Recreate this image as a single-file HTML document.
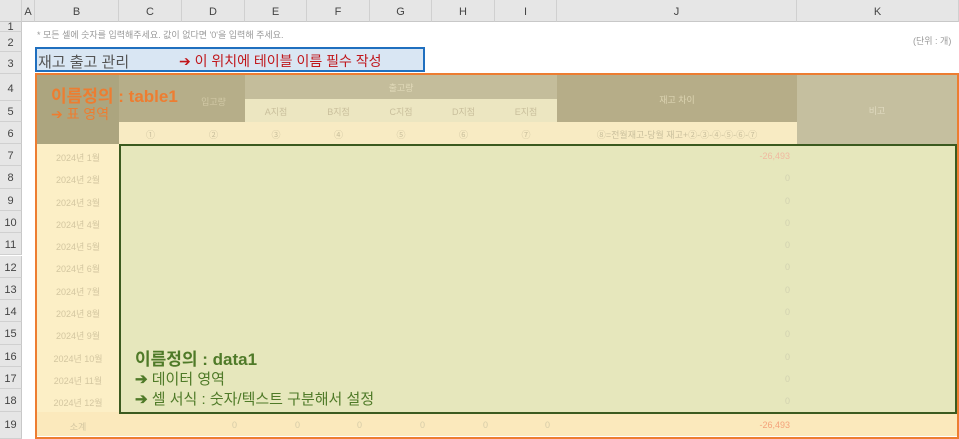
<!DOCTYPE html>
<html><head><meta charset="utf-8"><style>
*{margin:0;padding:0;box-sizing:border-box}
body{width:959px;height:439px;overflow:hidden;background:#fff;font-family:"Liberation Sans","Noto Sans CJK KR",sans-serif;position:relative}
.a{position:absolute}
.ch{position:absolute;top:0;height:22px;background:#e6e6e6;border-right:1px solid #d0d0d0;border-bottom:1px solid #c8c8c8;font-size:11px;color:#444;text-align:center;line-height:24px}
.rh{position:absolute;left:0;width:22px;background:#e6e6e6;border-bottom:1px solid #d0d0d0;border-right:1px solid #c8c8c8;font-size:11px;color:#444;text-align:center}
.t{position:absolute;font-size:9px;color:#c9bf9c;text-align:center}
.m{position:absolute;left:37px;width:82px;font-size:9px;color:#d3c6a0;text-align:center}
.z{position:absolute;font-size:9px;color:#d2d2b0;text-align:right}
</style></head><body>
<div class="ch" style="left:0;width:22px"></div>
<div class="ch" style="left:22px;width:13px">A</div>
<div class="ch" style="left:35px;width:84px">B</div>
<div class="ch" style="left:119px;width:63px">C</div>
<div class="ch" style="left:182px;width:63px">D</div>
<div class="ch" style="left:245px;width:62px">E</div>
<div class="ch" style="left:307px;width:63px">F</div>
<div class="ch" style="left:370px;width:62px">G</div>
<div class="ch" style="left:432px;width:63px">H</div>
<div class="ch" style="left:495px;width:62px">I</div>
<div class="ch" style="left:557px;width:240px">J</div>
<div class="ch" style="left:797px;width:162px">K</div>
<div class="rh" style="top:22px;height:10px;line-height:10px">1</div>
<div class="rh" style="top:32px;height:20px;line-height:22px">2</div>
<div class="rh" style="top:52px;height:22px;line-height:24px">3</div>
<div class="rh" style="top:74px;height:27px;line-height:30px">4</div>
<div class="rh" style="top:101px;height:21px;line-height:23px">5</div>
<div class="rh" style="top:122px;height:22px;line-height:24px">6</div>
<div class="rh" style="top:144px;height:22.3px;line-height:24px">7</div>
<div class="rh" style="top:166.3px;height:22.3px;line-height:24px">8</div>
<div class="rh" style="top:188.6px;height:22.3px;line-height:24px">9</div>
<div class="rh" style="top:210.9px;height:22.3px;line-height:24px">10</div>
<div class="rh" style="top:233.2px;height:22.3px;line-height:24px">11</div>
<div class="rh" style="top:255.5px;height:22.3px;line-height:24px">12</div>
<div class="rh" style="top:277.8px;height:22.3px;line-height:24px">13</div>
<div class="rh" style="top:300.1px;height:22.3px;line-height:24px">14</div>
<div class="rh" style="top:322.4px;height:22.3px;line-height:24px">15</div>
<div class="rh" style="top:344.7px;height:22.3px;line-height:24px">16</div>
<div class="rh" style="top:367px;height:22.3px;line-height:24px">17</div>
<div class="rh" style="top:389.3px;height:22.3px;line-height:24px">18</div>
<div class="rh" style="top:411.6px;height:27.4px;line-height:26px">19</div>

<div class="a" style="left:37px;top:28px;font-size:9px;color:#999">* 모든 셀에 숫자를 입력해주세요. 값이 없다면 '0'을 입력해 주세요.</div>
<div class="a" style="left:913px;top:34px;font-size:9px;color:#999">(단위 : 개)</div>

<div class="a" style="left:35px;top:47px;width:390px;height:25px;background:#d9e6f3;border:2px solid #1f6fbf"></div>
<div class="a" style="left:38px;top:51px;font-size:15px;color:#555">재고 출고 관리</div>
<div class="a" style="left:179px;top:51px;font-size:14px;color:#c0161b">➔ 이 위치에 테이블 이름 필수 작성</div>

<div class="a" style="left:37px;top:75px;width:82px;height:69px;background:#aca57f"></div>
<div class="a" style="left:119px;top:75px;width:126px;height:47px;background:#b6ae89"></div>
<div class="a" style="left:245px;top:75px;width:312px;height:24px;background:#c4bd9b"></div>
<div class="a" style="left:245px;top:99px;width:312px;height:23px;background:#ece6c1"></div>
<div class="a" style="left:557px;top:75px;width:240px;height:47px;background:#b6ad88"></div>
<div class="a" style="left:797px;top:75px;width:160px;height:69px;background:#c5bf9f"></div>
<div class="a" style="left:119px;top:122px;width:678px;height:22px;background:#f8ebc3"></div>
<div class="t" style="left:182px;top:95px;width:63px;color:#d0c8a5">입고량</div>
<div class="t" style="left:245px;top:81px;width:312px;color:#e0d9b8">출고량</div>
<div class="t" style="left:245px;top:105px;width:62px">A지점</div>
<div class="t" style="left:307px;top:105px;width:63px">B지점</div>
<div class="t" style="left:370px;top:105px;width:62px">C지점</div>
<div class="t" style="left:432px;top:105px;width:63px">D지점</div>
<div class="t" style="left:495px;top:105px;width:62px">E지점</div>
<div class="t" style="left:557px;top:93px;width:240px;color:#dcd4b2">재고 차이</div>
<div class="t" style="left:797px;top:104px;width:160px;color:#e0dac0">비고</div>
<div class="t" style="left:119px;top:128px;width:63px">①</div>
<div class="t" style="left:182px;top:128px;width:63px">②</div>
<div class="t" style="left:245px;top:128px;width:62px">③</div>
<div class="t" style="left:307px;top:128px;width:63px">④</div>
<div class="t" style="left:370px;top:128px;width:62px">⑤</div>
<div class="t" style="left:432px;top:128px;width:63px">⑥</div>
<div class="t" style="left:495px;top:128px;width:62px">⑦</div>
<div class="t" style="left:557px;top:128px;width:240px">⑧=전월재고-당월 재고+②-③-④-⑤-⑥-⑦</div>

<div class="a" style="left:37px;top:144px;width:82px;height:268px;background:#fcefc6"></div>
<div class="a" style="left:37px;top:412px;width:920px;height:24px;background:#fbe9bc"></div>
<div class="a" style="left:119px;top:144px;width:838px;height:270px;background:#e6e7bc;border:2px solid #3b5a1f"></div>

<div class="m" style="top:151px">2024년 1월</div>
<div class="m" style="top:173px">2024년 2월</div>
<div class="m" style="top:196px">2024년 3월</div>
<div class="m" style="top:218px">2024년 4월</div>
<div class="m" style="top:240px">2024년 5월</div>
<div class="m" style="top:262px">2024년 6월</div>
<div class="m" style="top:285px">2024년 7월</div>
<div class="m" style="top:307px">2024년 8월</div>
<div class="m" style="top:329px">2024년 9월</div>
<div class="m" style="top:352px">2024년 10월</div>
<div class="m" style="top:374px">2024년 11월</div>
<div class="m" style="top:396px">2024년 12월</div>
<div class="m" style="top:420px">소계</div>

<div class="z" style="right:169px;top:151px;color:#f0b9a0">-26,493</div>
<div class="z" style="right:169px;top:173px">0</div>
<div class="z" style="right:169px;top:196px">0</div>
<div class="z" style="right:169px;top:218px">0</div>
<div class="z" style="right:169px;top:240px">0</div>
<div class="z" style="right:169px;top:262px">0</div>
<div class="z" style="right:169px;top:285px">0</div>
<div class="z" style="right:169px;top:307px">0</div>
<div class="z" style="right:169px;top:329px">0</div>
<div class="z" style="right:169px;top:352px">0</div>
<div class="z" style="right:169px;top:374px">0</div>
<div class="z" style="right:169px;top:396px">0</div>
<div class="z" style="left:232px;top:420px;color:#d6cca8">0</div>
<div class="z" style="left:295px;top:420px;color:#d6cca8">0</div>
<div class="z" style="left:357px;top:420px;color:#d6cca8">0</div>
<div class="z" style="left:420px;top:420px;color:#d6cca8">0</div>
<div class="z" style="left:483px;top:420px;color:#d6cca8">0</div>
<div class="z" style="left:545px;top:420px;color:#d6cca8">0</div>
<div class="z" style="right:169px;top:420px;color:#f4a27a">-26,493</div>

<div class="a" style="left:35px;top:73px;width:924px;height:366px;border:2px solid #ed7d31"></div>
<div class="a" style="left:51px;top:82px;font-size:17px;font-weight:bold;color:#ed7d31">이름정의 : table1</div>
<div class="a" style="left:51px;top:104px;font-size:14px;color:#ed7d31">➔ 표 영역</div>

<div class="a" style="left:135px;top:345px;font-size:17px;font-weight:bold;color:#4f7a28">이름정의 : data1</div>
<div class="a" style="left:135px;top:368px;font-size:15px;color:#4f7a28"><b>➔</b> 데이터 영역</div>
<div class="a" style="left:135px;top:388px;font-size:15px;color:#4f7a28"><b>➔</b> 셀 서식 : 숫자/텍스트 구분해서 설정</div>
</body></html>
